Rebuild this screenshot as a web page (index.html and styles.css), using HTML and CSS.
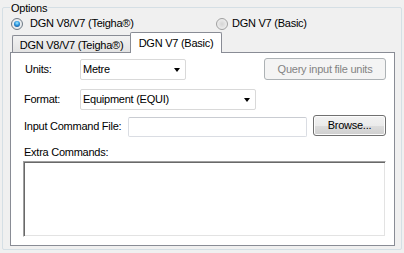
FILE: index.html
```
<!DOCTYPE html>
<html>
<head>
<meta charset="utf-8">
<link rel="stylesheet" href="styles.css">
</head>
<body>
<div class="group">
  <span class="legend">Options</span>
  <div class="radios">
    <div class="radio radio-first"><span class="dot checked"></span><span class="rlabel">DGN V8/V7 (Teigha®)</span></div>
    <div class="radio radio-second"><span class="dot"></span><span class="rlabel">DGN V7 (Basic)</span></div>
  </div>
  <div class="tabs">
    <div class="tab tab-inactive">DGN V8/V7 (Teigha®)</div>
    <div class="tab tab-active">DGN V7 (Basic)</div>
  </div>
  <div class="panel">
    <div class="row row-units">
      <span class="label label-units">Units:</span>
      <div class="select select-units"><span class="seltext">Metre</span><span class="arrow"></span></div>
      <div class="spacer"></div>
      <div class="button disabled">Query input file units</div>
    </div>
    <div class="row row-format">
      <span class="label label-format">Format:</span>
      <div class="select select-format"><span class="seltext">Equipment (EQUI)</span><span class="arrow"></span></div>
    </div>
    <div class="row row-input">
      <span class="label label-input">Input Command File:</span>
      <div class="textbox"></div>
      <div class="button browse">Browse...</div>
    </div>
    <div class="label-extra">Extra Commands:</div>
    <div class="textarea"></div>
  </div>
</div>
</body>
</html>
```
FILE: styles.css
```
* { box-sizing: border-box; }
html, body { margin: 0; padding: 0; }
body {
  width: 404px;
  height: 253px;
  background: #f0f0f0;
  font-family: "Liberation Sans", Arial, sans-serif;
  font-size: 11px;
  letter-spacing: -0.25px;
  color: #000;
  overflow: hidden;
}
.group {
  position: relative;
  margin: 7px 2px 0 2px;
  width: 400px;
  height: 243px;
  border: 1px solid #d5dfe5;
  border-radius: 2px;
  display: flex;
  flex-direction: column;
}
.legend {
  position: absolute;
  top: -6px;
  left: 7px;
  padding: 0 1px;
  line-height: 13px;
  background: #f0f0f0;
}
.radios {
  margin-top: 9px;
  height: 13px;
  display: flex;
  align-items: center;
}
.radio {
  display: flex;
  align-items: center;
  line-height: 13px;
}
.radio-first { margin-left: 8px; width: 205px; }
.radio-first .rlabel { margin-left: 7px; }
.radio-second .rlabel { margin-left: 4px; }
.dot {
  width: 12px;
  height: 12px;
  border-radius: 50%;
  border: 1px solid #a0a0a0;
  background: radial-gradient(circle at 50% 50%, #d4d4d4 0%, #e4e4e4 45%, #f6f6f6 100%);
  display: flex;
  align-items: center;
  justify-content: center;
}
.dot.checked { border-color: #6f7a85; background: radial-gradient(circle, #f4f4f4, #e0e4e8); }
.dot.checked::after {
  content: "";
  width: 6px;
  height: 6px;
  border-radius: 50%;
  background: radial-gradient(circle at 50% 35%, #a4ecff 0%, #2c96e0 45%, #0d3b78 100%);
}
.tabs {
  margin-top: 2px;
  height: 20px;
  padding-left: 9px;
  display: flex;
  align-items: flex-end;
}
.tab {
  display: flex;
  align-items: center;
  justify-content: center;
  border: 1px solid #898c95;
  border-bottom: none;
  white-space: nowrap;
}
.tab-inactive {
  width: 118px;
  height: 17px;
  padding-top: 1px;
  background: linear-gradient(#f2f2f2, #e3e3e3);
  border-right: none;
  border-radius: 2px 0 0 0;
}
.tab-active {
  position: relative;
  z-index: 1;
  width: 92px;
  height: 21px;
  margin-bottom: -1px;
  padding-bottom: 1px;
  background: #fff;
  border-radius: 2px 2px 0 0;
}
.panel {
  flex: 1;
  margin: 0 6px 3px 7px;
  background: #fff;
  border: 1px solid #898c95;
  padding: 5px 8px 0 12px;
  display: flex;
  flex-direction: column;
}
.row { display: flex; align-items: center; }
.row-units { height: 22px; }
.row-format { height: 21px; margin-top: 9px; }
.row-input { height: 22px; margin-top: 5px; }
.label { line-height: 13px; white-space: nowrap; }
.label-units { width: 57px; padding-left: 2px; }
.label-format { width: 57px; padding-left: 1px; }
.label-input { width: 105px; padding-left: 1px; }
.select {
  height: 21px;
  border: 1px solid #d9d9d9;
  border-radius: 2px;
  background: #fff;
  display: flex;
  align-items: center;
  padding-left: 2px;
  padding-right: 5px;
}
.select-units { width: 106px; align-self: flex-end; }
.select-format { width: 176px; }
.seltext { flex: 1; line-height: 13px; }
.arrow {
  width: 0;
  height: 0;
  border-left: 3.5px solid transparent;
  border-right: 3.5px solid transparent;
  border-top: 4px solid #000;
}
.spacer { flex: 1; }
.button {
  height: 21px;
  border: 1px solid #707070;
  border-radius: 3px;
  background: linear-gradient(#f2f2f2 0%, #ebebeb 50%, #dddddd 51%, #cfcfcf 100%);
  display: flex;
  align-items: center;
  justify-content: center;
  line-height: 13px;
  white-space: nowrap;
}
.button.disabled {
  width: 122px;
  height: 22px;
  border-color: #adb2b5;
  background: #f4f4f4;
  color: #838383;
}
.button.browse {
  width: 73px;
  margin-left: 6px;
  align-self: flex-start;
  box-shadow: inset 0 0 0 1px #fcfcfc;
}
.textbox {
  width: 179px;
  height: 20px;
  align-self: flex-end;
  border: 1px solid #dadde3;
  border-top-color: #c9ccd2;
  border-radius: 2px;
  background: #fff;
}
.label-extra {
  margin-top: 9px;
  line-height: 13px;
  padding-left: 1px;
}
.textarea {
  margin-top: 2px;
  width: 363px;
  height: 76px;
  background: #fff;
  border: 1px solid;
  border-color: #a0a0a0 #fff #fff #a0a0a0;
  box-shadow: inset 1px 1px 0 #696969, inset -1px -1px 0 #e3e3e3;
}
```
